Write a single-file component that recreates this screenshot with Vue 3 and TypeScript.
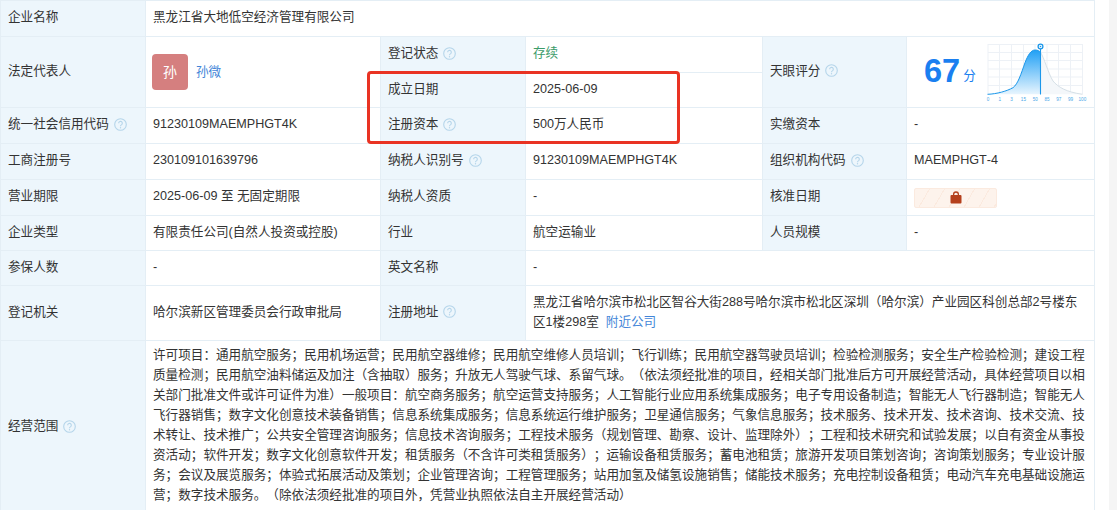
<script setup lang="ts">
const ticks = ['0', '1', '3', '15', '50', '85', '97', '99', '100']
const scope =
  '许可项目：通用航空服务；民用机场运营；民用航空器维修；民用航空维修人员培训；飞行训练；民用航空器驾驶员培训；检验检测服务；安全生产检验检测；建设工程质量检测；民用航空油料储运及加注（含抽取）服务；升放无人驾驶气球、系留气球。（依法须经批准的项目，经相关部门批准后方可开展经营活动，具体经营项目以相关部门批准文件或许可证件为准）一般项目：航空商务服务；航空运营支持服务；人工智能行业应用系统集成服务；电子专用设备制造；智能无人飞行器制造；智能无人飞行器销售；数字文化创意技术装备销售；信息系统集成服务；信息系统运行维护服务；卫星通信服务；气象信息服务；技术服务、技术开发、技术咨询、技术交流、技术转让、技术推广；公共安全管理咨询服务；信息技术咨询服务；工程技术服务（规划管理、勘察、设计、监理除外）；工程和技术研究和试验发展；以自有资金从事投资活动；软件开发；数字文化创意软件开发；租赁服务（不含许可类租赁服务）；运输设备租赁服务；蓄电池租赁；旅游开发项目策划咨询；咨询策划服务；专业设计服务；会议及展览服务；体验式拓展活动及策划；企业管理咨询；工程管理服务；站用加氢及储氢设施销售；储能技术服务；充电控制设备租赁；电动汽车充电基础设施运营；数字技术服务。（除依法须经批准的项目外，凭营业执照依法自主开展经营活动）'
</script>

<template>
  <div class="page">
    <svg width="0" height="0" class="defs">
      <symbol id="q" viewBox="0 0 13 13">
        <circle cx="6.5" cy="6.5" r="5.8" fill="none" stroke="#b5d5ea" stroke-width="1.1" />
        <path d="M4.7 5.2a1.8 1.8 0 1 1 2.9 1.4c-.7.5-1.1.8-1.1 1.6" fill="none" stroke="#b5d5ea" stroke-width="1.1" />
        <circle cx="6.5" cy="9.8" r=".7" fill="#b5d5ea" />
      </symbol>
    </svg>
    <div class="board">
      <div class="info">
        <div class="k">企业名称</div>
        <div class="v wide">黑龙江省大地低空经济管理有限公司</div>

        <div class="k tall">法定代表人</div>
        <div class="v tall person">
          <span class="avatar">孙</span>
          <a class="link">孙微</a>
        </div>
        <div class="k">登记状态<svg class="help"><use href="#q" /></svg></div>
        <div class="v live">存续</div>
        <div class="k tall">天眼评分<svg class="help"><use href="#q" /></svg></div>
        <div class="v tall score">
          <span class="num">67</span>
          <span class="unit">分</span>
          <svg class="chart" width="104" height="62" viewBox="985 40 104 62">
            <defs>
              <linearGradient id="bell" x1="0" y1="0" x2="0" y2="1">
                <stop offset="0" stop-color="#20a0f5" />
                <stop offset="1" stop-color="#e8f5fe" />
              </linearGradient>
            </defs>
            <g stroke="#edf1f6" stroke-width="1" fill="none">
              <path d="M988 43.5H1082.5M988 51.5H1082.5M988 59.5H1082.5M988 68H1082.5M988 76H1082.5M988 84.5H1082.5" />
              <path d="M988 43V93M999.5 43V93M1011.5 43V93M1023.5 43V93M1035 43V93M1047 43V93M1058.5 43V93M1070.5 43V93M1082.5 43V93" />
            </g>
            <path d="M1040.5 51.5C1044 56 1048 72 1053 80C1058 86 1066 91 1082.5 93.3H1040.5Z" fill="#f4f7fa" />
            <path d="M1040.5 51.5C1044 56 1048 72 1053 80C1058 86 1066 91 1082.5 93.3" fill="none" stroke="#d6e0e7" stroke-width="1" />
            <path d="M987.5 93.3C997 93 1007 90 1013 86.7C1018 83 1021 73 1025 61.7C1028 54 1031 49 1035 49C1038 49 1039.5 50 1040.5 51.5V93.3Z" fill="url(#bell)" />
            <path d="M987.5 93.3C997 93 1007 90 1013 86.7C1018 83 1021 73 1025 61.7C1028 54 1031 49 1035 49C1038 49 1039.5 50 1040.5 51.5" fill="none" stroke="#1b97ea" stroke-width="1" />
            <path d="M1040.5 47V93.5" stroke="#1b97ea" stroke-width="1.1" />
            <circle cx="1040.5" cy="45.5" r="2.4" fill="#fff" stroke="#1b97ea" stroke-width="1.3" />
            <circle cx="1040.5" cy="45.5" r=".8" fill="#1b97ea" />
            <text
              v-for="(t, i) in ticks"
              :key="t"
              :x="988 + i * 11.8"
              y="99.8"
              text-anchor="middle"
              class="tick"
            >{{ t }}</text>
          </svg>
        </div>

        <div class="k">成立日期</div>
        <div class="v">2025-06-09</div>

        <div class="k">统一社会信用代码<svg class="help"><use href="#q" /></svg></div>
        <div class="v">91230109MAEMPHGT4K</div>
        <div class="k">注册资本<svg class="help"><use href="#q" /></svg></div>
        <div class="v">500万人民币</div>
        <div class="k">实缴资本</div>
        <div class="v">-</div>

        <div class="k">工商注册号</div>
        <div class="v">230109101639796</div>
        <div class="k">纳税人识别号<svg class="help"><use href="#q" /></svg></div>
        <div class="v">91230109MAEMPHGT4K</div>
        <div class="k">组织机构代码<svg class="help"><use href="#q" /></svg></div>
        <div class="v">MAEMPHGT-4</div>

        <div class="k">营业期限</div>
        <div class="v">2025-06-09 至 无固定期限</div>
        <div class="k">纳税人资质</div>
        <div class="v">-</div>
        <div class="k">核准日期</div>
        <div class="v lockcell">
          <span class="locked">
            <svg width="12" height="13" viewBox="0 0 12 13">
              <path d="M3.6 5V3.4a2.4 2.4 0 0 1 4.8 0V5" fill="none" stroke="#b5401c" stroke-width="1.3" />
              <rect x=".5" y="4" width="11" height="8.6" rx="1" fill="#b5401c" />
            </svg>
          </span>
        </div>

        <div class="k">企业类型</div>
        <div class="v">有限责任公司(自然人投资或控股)</div>
        <div class="k">行业</div>
        <div class="v">航空运输业</div>
        <div class="k">人员规模</div>
        <div class="v">-</div>

        <div class="k">参保人数</div>
        <div class="v">-</div>
        <div class="k">英文名称</div>
        <div class="v span3">-</div>

        <div class="k">登记机关</div>
        <div class="v">哈尔滨新区管理委员会行政审批局</div>
        <div class="k">注册地址<svg class="help"><use href="#q" /></svg></div>
        <div class="v span3">
          <p class="addr">黑龙江省哈尔滨市松北区智谷大街288号哈尔滨市松北区深圳（哈尔滨）产业园区科创总部2号楼东区1楼298室<a class="link near">附近公司</a></p>
        </div>

        <div class="k last">经营范围<svg class="help"><use href="#q" /></svg></div>
        <div class="v wide scopecell"><p class="scope">{{ scope }}</p></div>
      </div>
      <div class="mark"></div>
    </div>
    <div class="track"></div>
  </div>
</template>

<style scoped>
.page {
  height: 510px;
  width: 1117px;
  overflow: hidden;
  display: flex;
  background: #fff;
  font-family: "Liberation Sans", "Noto Sans CJK SC", sans-serif;
  font-size: 12.6px;
  line-height: 20px;
  color: #333;
  text-spacing-trim: space-all;
  text-autospace: no-autospace;
  font-kerning: none;
  font-feature-settings: "chws" 0, "palt" 0, "kern" 0;
}
.defs {
  position: absolute;
}
.board {
  position: relative;
  width: 1095px;
  flex: none;
}
.info {
  display: grid;
  grid-template-columns: 144px 234px 144px 236px 143px 187px;
  grid-template-rows: 35px 35px 34px 35px 35px 35px 34px 34px 54px 170px;
  gap: 1px;
  padding: 1px;
  background: #e4eef5;
}
.k,
.v {
  display: flex;
  align-items: center;
  padding: 0 8px 3px 7px;
  min-width: 0;
}
.k {
  background: #edf6fc;
}
.v {
  background: #fff;
}
.wide {
  grid-column: span 5;
}
.span3 {
  grid-column: span 3;
}
.tall {
  grid-row: span 2;
}
.last {
  padding-bottom: 0;
}
.scopecell {
  padding-bottom: 2px;
}
.lockcell {
  padding-bottom: 0;
}
.help {
  width: 13px;
  height: 13px;
  margin-left: 5px;
  flex: none;
}
.person {
  gap: 8px;
  padding: 0 0 0 6px;
}
.avatar {
  width: 36px;
  height: 36px;
  border-radius: 4px;
  background: #d57f7f;
  color: #fff;
  font-size: 14px;
  display: flex;
  align-items: center;
  justify-content: center;
}
.link {
  color: #4285d8;
}
.live {
  color: #3d9c6a;
  padding-bottom: 3px;
}
.score {
  padding: 0 0 1px 17px;
}
.num {
  font-size: 32.5px;
  font-weight: 700;
  color: #1a7ff0;
  line-height: 1;
}
.unit {
  color: #1a7ff0;
  margin: 9px 0 0 3px;
}
.chart {
  margin-left: 9px;
  flex: none;
}
.tick {
  font-size: 4.6px;
  fill: #4aa8e8;
}
.locked {
  width: 83px;
  height: 20px;
  box-sizing: border-box;
  display: flex;
  align-items: center;
  justify-content: center;
  border: 1px solid #fbeadf;
  border-radius: 2px;
  background: repeating-linear-gradient(
    120deg,
    #fdf3ec 0 12px,
    #fbeadf 12px 13px
  );
}
.addr {
  margin: 0;
}
.near {
  margin-left: 7px;
}
.scope {
  margin: 0;
}
.mark {
  position: absolute;
  left: 367px;
  top: 71px;
  width: 313px;
  height: 73px;
  box-sizing: border-box;
  border: 3px solid #e93323;
  border-radius: 4px;
}
.track {
  margin-left: 14px;
  width: 8px;
  background: #f5f5f5;
}
</style>

<style>
html,
body {
  margin: 0;
  overflow: hidden;
}
</style>
